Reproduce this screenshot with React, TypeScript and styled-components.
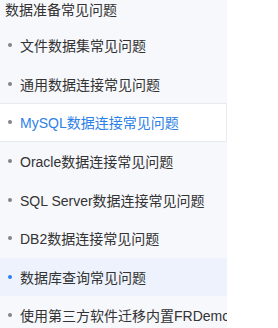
import styled, { createGlobalStyle } from 'styled-components';

const GlobalStyle = createGlobalStyle`
  html, body {
    margin: 0;
    padding: 0;
    overflow: hidden;
    background: #ffffff;
  }
  body {
    font-family: 'Liberation Sans', 'Noto Sans CJK SC', sans-serif;
    color: #333;
  }
`;

const items = [
  { label: '文件数据集常见问题' },
  { label: '通用数据连接常见问题' },
  { label: 'MySQL数据连接常见问题', active: true },
  { label: 'Oracle数据连接常见问题' },
  { label: 'SQL Server数据连接常见问题' },
  { label: 'DB2数据连接常见问题' },
  { label: '数据库查询常见问题', hover: true },
  { label: '使用第三方软件迁移内置FRDemo数据库' },
];

const contentLines = [
  '数据准备', '', '', '-', '1', '', 'M', 'l', '', '意', '斯', '', '', '-', '', '', '', '', '注',
];

const App = () => {
  return (
    <>
      <GlobalStyle />
      <Page>
        <Sidebar>
          <Title>数据准备常见问题</Title>
          <List>
            {items.map((item) => (
              <Item key={item.label} $active={item.active} $hover={item.hover}>
                <Dot $blue={item.hover} />
                <Label $active={item.active}>{item.label}</Label>
              </Item>
            ))}
          </List>
          <Handle>
            <i />
            <i />
            <i />
            <i />
          </Handle>
        </Sidebar>
        <Content>
          {contentLines.map((line, i) => (
            <Line key={i}>{line || '\u00a0'}</Line>
          ))}
        </Content>
      </Page>
    </>
  );
};

const Page = styled.div`
  display: flex;
  width: 278px;
  height: 328px;
  overflow: hidden;
`;

const Sidebar = styled.div`
  position: relative;
  flex: 0 0 227px;
  background: #f7f8fc;
  overflow: hidden;
`;

const Title = styled.div`
  height: 22px;
  padding-left: 5px;
  margin-top: -1px;
  font-size: 14px;
  line-height: 22px;
  color: #333;
  white-space: nowrap;
`;

const List = styled.div`
  display: flex;
  flex-direction: column;
  margin-top: 5px;
`;

const Item = styled.div<{ $active?: boolean; $hover?: boolean }>`
  box-sizing: border-box;
  height: 38.6px;
  display: flex;
  align-items: center;
  gap: 8px;
  padding-left: 8px;
  white-space: nowrap;
  background: ${({ $active, $hover }) =>
    $active ? '#ffffff' : $hover ? '#edf2fc' : 'transparent'};
  border: 1px solid ${({ $active }) => ($active ? '#e9eaef' : 'transparent')};
  border-left: none;
`;

const Dot = styled.span<{ $blue?: boolean }>`
  flex: 0 0 4px;
  width: 4px;
  height: 4px;
  border-radius: 50%;
  background: ${({ $blue }) => ($blue ? '#2d7ff0' : '#80848c')};
`;

const Label = styled.span<{ $active?: boolean }>`
  font-size: 14px;
  color: ${({ $active }) => ($active ? '#2d7fe8' : '#333')};
`;

const Handle = styled.div`
  position: absolute;
  right: -4px;
  top: 277px;
  display: flex;
  flex-direction: column;
  gap: 2px;
  i {
    display: block;
    width: 2px;
    height: 2px;
    background: #b5bcc6;
  }
`;

const Content = styled.div`
  flex: 1;
  padding-left: 53px;
  background: #fff;
  overflow: hidden;
`;

const Line = styled.div`
  font-size: 14px;
  line-height: 18px;
  color: #333;
  white-space: nowrap;
`;

export default App;
